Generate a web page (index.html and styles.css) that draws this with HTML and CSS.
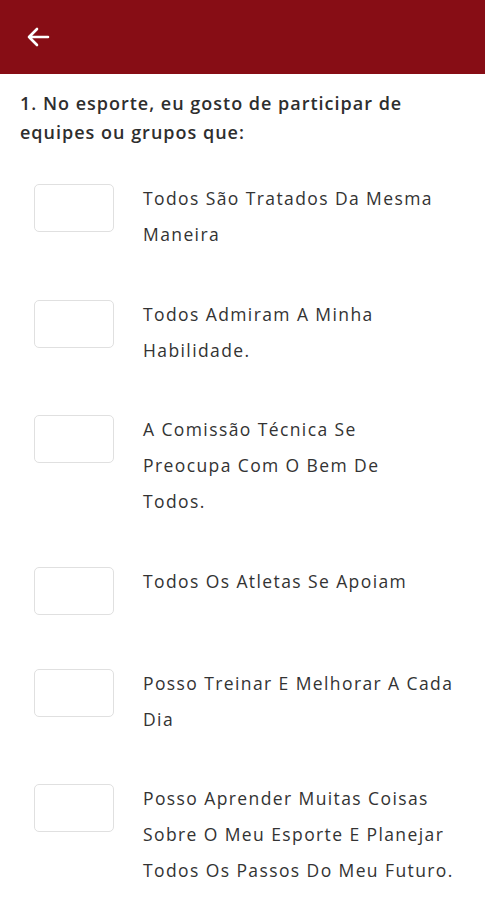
FILE: index.html
```html
<!DOCTYPE html>
<html lang="pt">
<head>
<meta charset="utf-8">
<link rel="stylesheet" href="styles.css">
</head>
<body>
<header class="appbar">
  <svg class="back" width="26" height="22" viewBox="0 0 26 22" aria-hidden="true">
    <path d="M23 11H4M12 3L4 11L12 19" fill="none" stroke="#fff" stroke-width="2.6" stroke-linecap="round" stroke-linejoin="round"/>
  </svg>
</header>
<main class="content">
  <p class="question">1. No esporte, eu gosto de participar de equipes ou grupos que:</p>
  <ul class="options">
    <li class="option"><span class="check"></span><span class="label">Todos São Tratados Da Mesma Maneira</span></li>
    <li class="option"><span class="check"></span><span class="label">Todos Admiram A Minha Habilidade.</span></li>
    <li class="option"><span class="check"></span><span class="label">A Comissão Técnica Se<br>Preocupa Com O Bem De<br>Todos.</span></li>
    <li class="option"><span class="check"></span><span class="label">Todos Os Atletas Se Apoiam</span></li>
    <li class="option"><span class="check"></span><span class="label">Posso Treinar E Melhorar A Cada Dia</span></li>
    <li class="option"><span class="check"></span><span class="label">Posso Aprender Muitas Coisas Sobre O Meu Esporte E Planejar Todos Os Passos Do Meu Futuro.</span></li>
  </ul>
</main>
</body>
</html>
```
FILE: styles.css
```css
* { box-sizing: border-box; }
html, body { margin: 0; padding: 0; background: #fff; }
body {
  width: 485px;
  font-family: "Open Sans", "Liberation Sans", sans-serif;
  color: #333;
}
.appbar {
  height: 74px;
  background: #870d15;
  display: flex;
  align-items: center;
  padding-left: 25px;
}
.back { display: block; }
.content { padding: 15px 20px 0 20px; }
.question {
  margin: 0;
  font-size: 18px;
  font-weight: 600;
  line-height: 28.5px;
  color: #2e2e2e;
  letter-spacing: 1px;
}
.options {
  list-style: none;
  margin: 34px 0 0 0;
  padding: 0 0 0 14px;
  display: flex;
  flex-direction: column;
  gap: 43.5px;
}
.option {
  display: flex;
  align-items: flex-start;
  gap: 29px;
  min-height: 58.5px;
}
.check {
  flex: none;
  width: 80px;
  height: 48px;
  margin-top: 4px;
  border: 1.5px solid #e0e0e0;
  border-radius: 5px;
}
.label {
  width: 312px;
  font-size: 17.5px;
  line-height: 36px;
  color: #333;
  letter-spacing: 1.4px;
}
```
